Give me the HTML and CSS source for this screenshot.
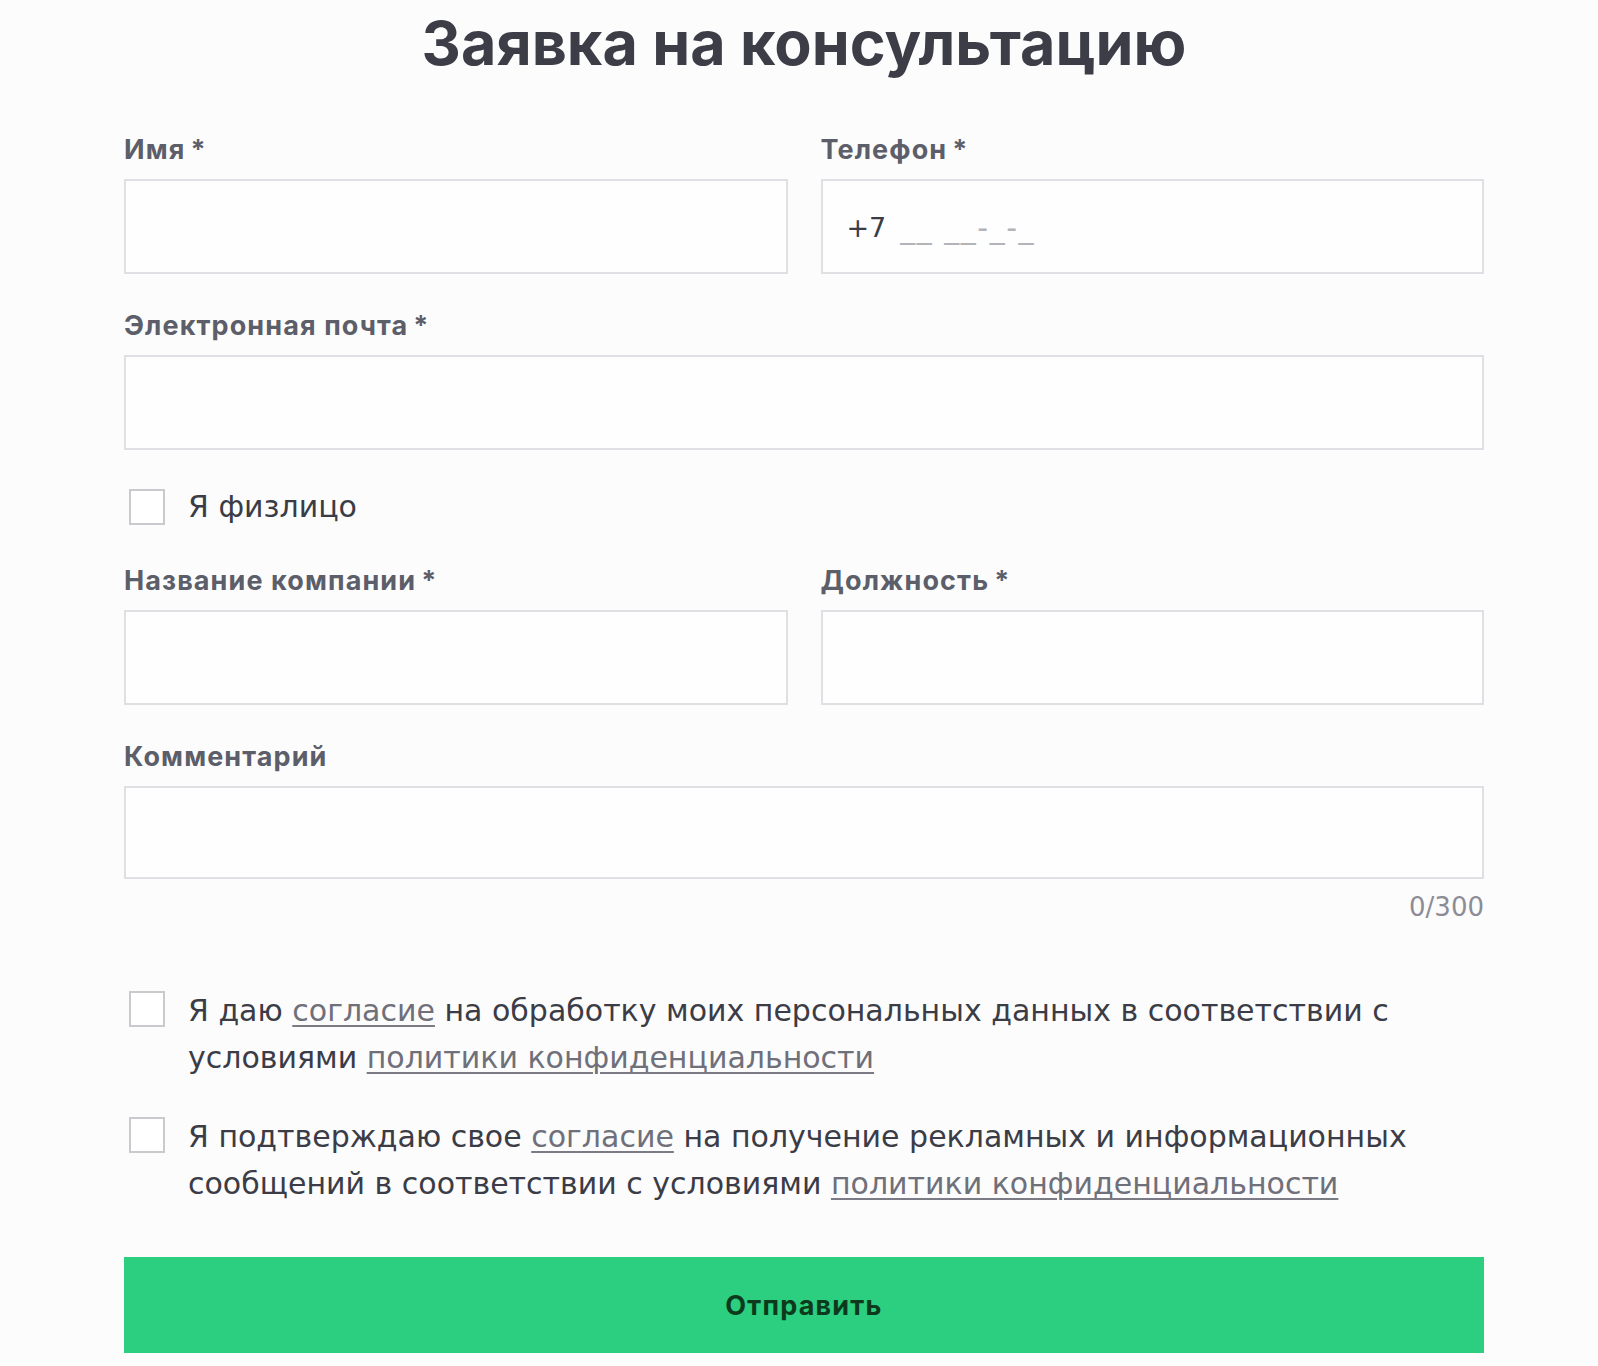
FILE: index.html
```html
<!DOCTYPE html>
<html lang="ru">
<head>
<meta charset="utf-8">
<title>Заявка на консультацию</title>
<link rel="stylesheet" href="styles.css">
</head>
<body>
<form class="form">
  <h1 class="title">Заявка на консультацию</h1>

  <div class="row two">
    <div class="field">
      <label class="label">Имя<span class="req">*</span></label>
      <div class="input"></div>
    </div>
    <div class="field">
      <label class="label">Телефон<span class="req">*</span></label>
      <div class="input phone"><span class="prefix">+7</span><span class="mask">__ __-_-_</span></div>
    </div>
  </div>

  <div class="row">
    <div class="field">
      <label class="label">Электронная почта<span class="req">*</span></label>
      <div class="input"></div>
    </div>
  </div>

  <div class="check-row">
    <span class="box"></span>
    <span class="check-text">Я физлицо</span>
  </div>

  <div class="row two">
    <div class="field">
      <label class="label">Название компании<span class="req">*</span></label>
      <div class="input"></div>
    </div>
    <div class="field">
      <label class="label">Должность<span class="req">*</span></label>
      <div class="input"></div>
    </div>
  </div>

  <div class="row">
    <div class="field">
      <label class="label">Комментарий</label>
      <div class="input textarea"></div>
      <div class="counter">0/300</div>
    </div>
  </div>

  <div class="consent first">
    <span class="box"></span>
    <p class="consent-text">Я даю <a class="link">согласие</a> на обработку моих персональных данных в соответствии с условиями <a class="link">политики конфиденциальности</a></p>
  </div>

  <div class="consent">
    <span class="box"></span>
    <p class="consent-text">Я подтверждаю свое <a class="link">согласие</a> на получение рекламных и информационных сообщений в соответствии с условиями <a class="link">политики конфиденциальности</a></p>
  </div>

  <div class="submit">Отправить</div>
</form>
</body>
</html>
```

FILE: styles.css
```css
html, body {
  margin: 0;
  padding: 0;
  background: #fcfcfd;
}

.form {
  width: 1360px;
  margin-left: 124px;
  font-family: "DejaVu Sans", "Open Sans", sans-serif;
  color: #3b3c46;
}

.title {
  margin: 0;
  padding-top: 3px;
  font-family: Inter, "Noto Sans", sans-serif;
  font-weight: 700;
  font-size: 61px;
  line-height: 80px;
  text-align: center;
  color: #3d3d48;
}

.row {
  margin-top: 35px;
}
.title + .row {
  margin-top: 50px;
}

.two {
  display: grid;
  grid-template-columns: 1fr 1fr;
  column-gap: 33px;
}

.field {
  display: flex;
  flex-direction: column;
}

.label {
  display: block;
  font-family: Inter, "Noto Sans", sans-serif;
  font-weight: 700;
  font-size: 27px;
  line-height: 34px;
  letter-spacing: 1.1px;
  color: #5c5e69;
  margin-bottom: 12px;
}

.req {
  margin-left: 5px;
}

.input {
  box-sizing: border-box;
  height: 95px;
  border: 2px solid #dfe0e4;
  background: #fefefe;
}

.textarea {
  height: 93px;
}

.phone {
  display: flex;
  align-items: center;
  padding-left: 24px;
  font-size: 27px;
  padding-top: 2px;
}

.prefix {
  color: #3b3c46;
}

.mask {
  margin-left: 14px;
  font-size: 30px;
  letter-spacing: 1.5px;
  color: #b3b4ba;
}

.counter {
  margin-top: 10px;
  text-align: right;
  font-size: 26px;
  line-height: 36px;
  color: #8b8c95;
}

.check-row {
  display: flex;
  align-items: center;
  margin-top: 39px;
  height: 35px;
  padding-left: 5px;
}

.box {
  box-sizing: border-box;
  flex: none;
  width: 36px;
  height: 36px;
  border: 2px solid #c9cace;
  background: #ffffff;
}

.check-text {
  margin-left: 23px;
  font-size: 30px;
  color: #3b3c46;
}

.check-row + .row {
  margin-top: 40px;
}

.consent {
  display: flex;
  align-items: flex-start;
  padding-left: 5px;
  margin-top: 32px;
}

.consent.first {
  margin-top: 62px;
}

.consent .box {
  margin-top: 4px;
}

.consent-text {
  margin: 0 0 0 23px;
  font-size: 30px;
  line-height: 47px;
  color: #3b3c46;
}

.link {
  color: #6f707a;
  text-decoration: underline;
  text-decoration-color: #7a7b85;
  text-decoration-thickness: 2px;
  text-underline-offset: 4px;
}

.submit {
  margin-top: 50px;
  height: 96px;
  display: flex;
  align-items: center;
  justify-content: center;
  background: #2bcf7f;
  font-family: Inter, "Noto Sans", sans-serif;
  font-weight: 700;
  font-size: 27px;
  letter-spacing: 1.2px;
  color: #0d3a1c;
}
```
